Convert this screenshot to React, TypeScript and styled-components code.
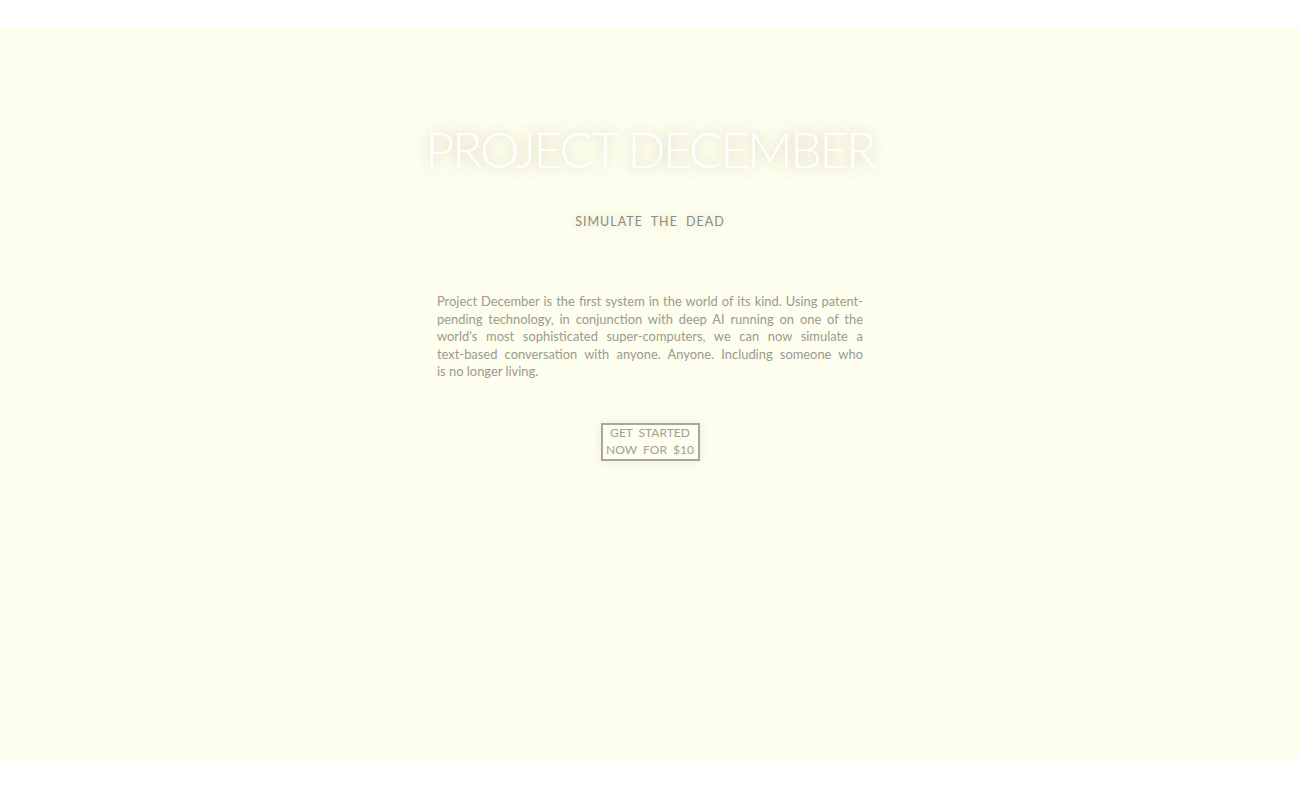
import styled, { createGlobalStyle } from "styled-components"

const GlobalStyle = createGlobalStyle`
    html, body {
        margin: 0;
        padding: 0;
        background: #ffffff;
    }
    body {
        font-family: "Lato", "DejaVu Sans", sans-serif;
    }
`

const Page = styled.div`
    padding: 27px 0 28px;
    box-sizing: border-box;
`

const Band = styled.main`
    height: 733px;
    background: #fefeee;
    display: flex;
    flex-direction: column;
    align-items: center;
    padding-top: 92px;
    box-sizing: border-box;
`

const Title = styled.h1`
    margin: 0;
    font-family: "Lato", sans-serif;
    font-weight: 300;
    font-size: 50px;
    line-height: 60px;
    letter-spacing: -2.3px;
    color: #ffffff;
    text-shadow: 0 0 12px rgba(150, 150, 110, 0.35), 0 0 24px rgba(150, 150, 110, 0.2);
`

const Tagline = styled.h2`
    margin: 33px 0 0;
    font-family: "Lato", sans-serif;
    font-weight: 400;
    font-size: 12.5px;
    line-height: 20px;
    letter-spacing: 1px;
    word-spacing: 4px;
    color: #8c8c84;
    text-shadow: 0 0 10px rgba(160, 160, 120, 0.35);
`

const Blurb = styled.p`
    margin: 61px 0 0;
    width: 426px;
    font-family: "Lato", "DejaVu Sans", sans-serif;
    font-size: 12.9px;
    line-height: 17.6px;
    text-align: justify;
    color: #9a9a8e;
`

const Cta = styled.button`
    margin-top: 42px;
    width: 99px;
    padding: 0;
    background: transparent;
    border: 2px solid #a8a8a0;
    box-shadow: 0 0 10px rgba(170, 170, 130, 0.25);
    font-family: "Lato", sans-serif;
    font-size: 12px;
    line-height: 16.8px;
    letter-spacing: 0;
    word-spacing: 3px;
    white-space: nowrap;
    color: #a0a096;
    cursor: pointer;
`

// non-breaking hyphen and space keep the reference's line breaks
const blurb =
    "Project December is the first system in the world of its kind. Using patent-pending " +
    "technology, in conjunction with deep AI running on one of the world's most sophisticated " +
    "super-computers, we can now simulate a text\u2011based conversation with anyone. Anyone. " +
    "Including someone who is\u00A0no longer living."

export default function App() {
    return (
        <Page>
            <GlobalStyle />
            <Band>
                <Title>PROJECT DECEMBER</Title>
                <Tagline>SIMULATE THE DEAD</Tagline>
                <Blurb>{blurb}</Blurb>
                <Cta>
                    GET STARTED
                    <br />
                    NOW FOR $10
                </Cta>
            </Band>
        </Page>
    )
}
